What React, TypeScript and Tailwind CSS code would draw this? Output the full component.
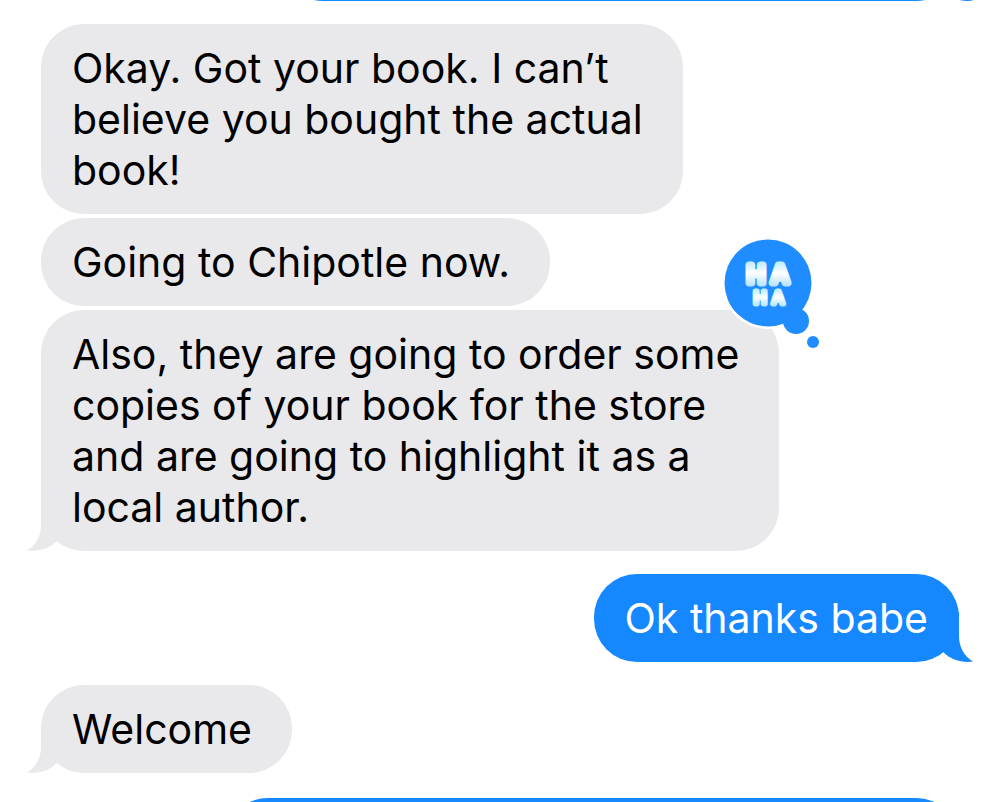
import type { ReactNode } from "react";

interface BubbleProps {
  lines?: string[];
  from: "them" | "me";
  tail?: boolean;
  className?: string;
  children?: ReactNode;
}

function Tail({ from }: { from: "them" | "me" }) {
  return (
    <svg
      viewBox="0 0 36 50"
      className={`absolute bottom-0 w-9 h-[50px] ${
        from === "me" ? "-right-3.5 text-[#1588ff]" : "-left-3.5 -scale-x-100 text-[#e9e9eb]"
      }`}
      fill="currentColor"
      aria-hidden="true"
    >
      <path d="M0 0H22V24C22 35 27 44 36 49.6C25 51 14 48 6 40L0 34Z" />
    </svg>
  );
}

function Haha() {
  return (
    <svg
      viewBox="0 0 104 120"
      className="absolute -top-[73px] -right-[45px] w-[104px] h-[120px]"
      role="img"
      aria-label="Haha reaction"
    >
      <defs>
        <linearGradient id="puff" x1="0" y1="0" x2="0" y2="1">
          <stop offset="0.1" stopColor="#c4ecff" />
          <stop offset="0.45" stopColor="#ffffff" />
          <stop offset="1" stopColor="#a5dcfc" />
        </linearGradient>
      </defs>
      <g fill="#1f8cff">
        <circle cx="48" cy="46" r="46" fill="#ffffff" />
        <circle cx="48" cy="46" r="43.5" />
        <circle cx="76" cy="84" r="13" />
        <circle cx="93" cy="105" r="6" />
      </g>
      <g
        fill="url(#puff)"
        stroke="url(#puff)"
        strokeLinejoin="round"
        strokeLinecap="round"
        textAnchor="middle"
        className="font-['Inter',sans-serif] font-medium"
      >
        <text x="36 60" y="46" fontSize="24" strokeWidth="7">HA</text>
        <text x="40 58" y="67" fontSize="17" strokeWidth="5">HA</text>
      </g>
    </svg>
  );
}

function Bubble({ lines = [], from, tail, className = "w-fit", children }: BubbleProps) {
  return (
    <div
      className={`relative min-h-[88px] pl-[31px] pt-[19px] pb-[18px] rounded-[43px] ${
        from === "me" ? "self-end pr-[31px] bg-[#1588ff] text-white" : "pr-10 bg-[#e9e9eb] text-black"
      } ${className}`}
    >
      {tail && <Tail from={from} />}
      <p className="relative">
        {lines.map((line) => (
          <span key={line} className="block">{line}</span>
        ))}
      </p>
      {children}
    </div>
  );
}

export default function App() {
  return (
    <main className="h-screen overflow-hidden bg-white px-[41px] font-['Inter',sans-serif] text-[41px] leading-[51px]">
      <div className="flex flex-col gap-[23px]">
        {/* Earlier message, scrolled almost out of view */}
        <Bubble from="me" tail className="-mt-[87px] w-[74%]" />

        <div className="flex flex-col gap-1">
          <Bubble from="them" lines={["Okay. Got your book. I can’t", "believe you bought the actual", "book!"]} />
          <Bubble from="them" lines={["Going to Chipotle now."]} />
          <Bubble
            from="them"
            tail
            lines={[
              "Also, they are going to order some",
              "copies of your book for the store",
              "and are going to highlight it as a",
              "local author.",
            ]}
          >
            <Haha />
          </Bubble>
        </div>

        <Bubble from="me" tail lines={["Ok thanks babe"]} />
        <Bubble from="them" tail lines={["Welcome"]} />

        {/* Next message, just coming into view */}
        <Bubble from="me" tail className="mt-0.5 w-4/5" />
      </div>
    </main>
  );
}
